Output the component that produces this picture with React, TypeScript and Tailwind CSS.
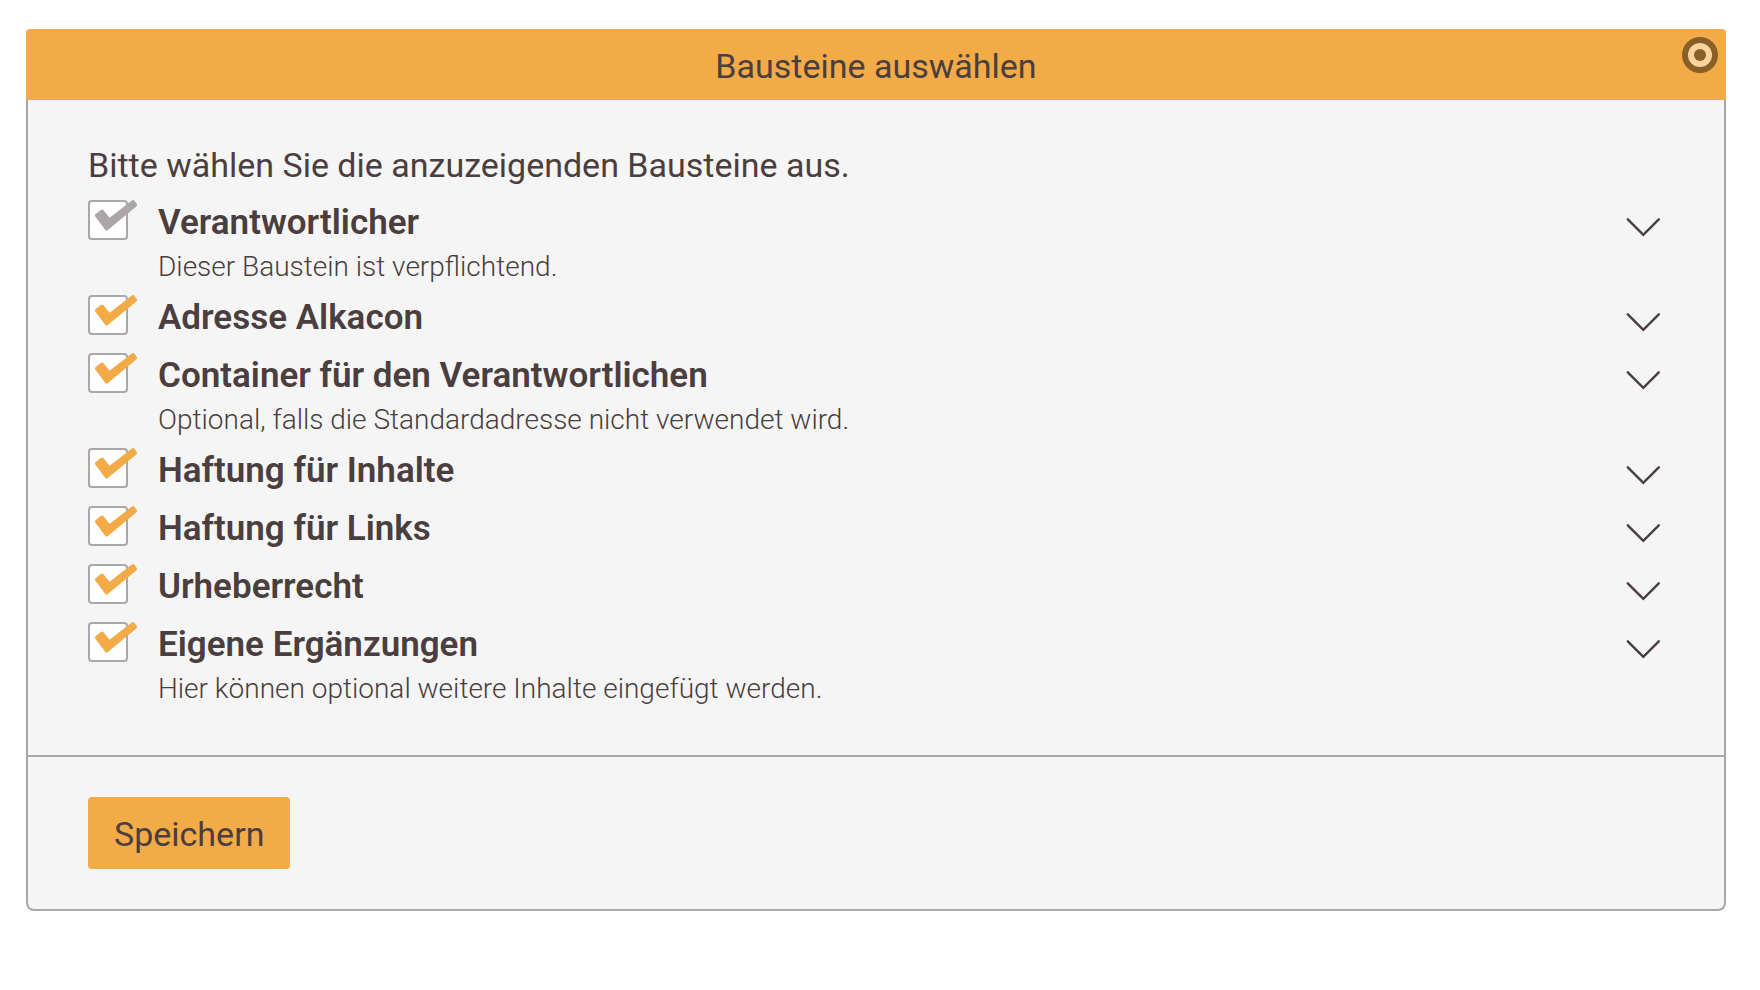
import { useState } from "react";

interface Baustein {
	id: string;
	title: string;
	hint?: string;
	required?: boolean;
}

const BAUSTEINE: Baustein[] = [
	{
		id: "verantwortlicher",
		title: "Verantwortlicher",
		hint: "Dieser Baustein ist verpflichtend.",
		required: true,
	},
	{ id: "adresse", title: "Adresse Alkacon" },
	{
		id: "container",
		title: "Container für den Verantwortlichen",
		hint: "Optional, falls die Standardadresse nicht verwendet wird.",
	},
	{ id: "inhalte", title: "Haftung für Inhalte" },
	{ id: "links", title: "Haftung für Links" },
	{ id: "urheberrecht", title: "Urheberrecht" },
	{
		id: "ergaenzungen",
		title: "Eigene Ergänzungen",
		hint: "Hier können optional weitere Inhalte eingefügt werden.",
	},
];

const TargetIcon = () => (
	<svg className="block h-9 w-9" viewBox="0 0 36 36" aria-hidden="true">
		<circle cx="18" cy="18" r="18" fill="#875f27" />
		<circle cx="18" cy="18" r="12" fill="#f9d39d" />
		<circle cx="18" cy="18" r="6" fill="#875f27" />
	</svg>
);

// The tick is wider than its box and sticks out at the top right.
const Tick = () => (
	<svg
		className="pointer-events-none invisible absolute left-0 top-0 h-10 w-[50px] text-[#f3ab47] peer-checked:visible peer-disabled:text-[#aca6a6]"
		viewBox="0 0 50 40"
		fill="currentColor"
		stroke="currentColor"
		strokeWidth="4"
		strokeLinejoin="round"
		aria-hidden="true"
	>
		<path d="M9 15.6 14 11.6 21.2 20.6 45 2.2 47 5 18.6 28.4Z" />
	</svg>
);

const Chevron = () => (
	<svg
		className="block h-5 w-9"
		viewBox="0 0 36 20"
		fill="none"
		stroke="currentColor"
		strokeWidth="2.4"
		strokeLinecap="round"
		aria-hidden="true"
	>
		<path d="M2.8 2.3 18.3 17.8 33.8 2.3" />
	</svg>
);

interface RowProps {
	item: Baustein;
	checked: boolean;
	onToggle: () => void;
}

const BausteinRow = ({ item, checked, onToggle }: RowProps) => (
	<li className="flex items-start pb-2">
		<span className="relative mt-0.5 h-10 w-10 shrink-0">
			<input
				id={item.id}
				type="checkbox"
				checked={checked}
				disabled={item.required}
				onChange={onToggle}
				className="peer block h-10 w-10 appearance-none rounded border-2 border-[#aca6a6] bg-white"
			/>
			<Tick />
		</span>
		<div className="ml-[30px] min-w-0 grow">
			<label
				htmlFor={item.id}
				className="block text-[35px] font-semibold leading-[50px]"
			>
				{item.title}
			</label>
			{item.hint && (
				<p className="text-[28px] font-light leading-[37px]">{item.hint}</p>
			)}
		</div>
		<button
			type="button"
			aria-label={`${item.title} anzeigen`}
			className="mr-[63px] mt-[19px] shrink-0"
		>
			<Chevron />
		</button>
	</li>
);

export default function App() {
	const [selected, setSelected] = useState<string[]>(
		BAUSTEINE.map((item) => item.id)
	);

	const toggle = (id: string) => {
		setSelected((prev) =>
			prev.includes(id) ? prev.filter((x) => x !== id) : [...prev, id]
		);
	};

	return (
		<main className="min-h-screen bg-white pb-8 pl-[26px] pr-[34px] pt-[29px] font-['Roboto',sans-serif] text-[#4a3e3e]">
			<form onSubmit={(e) => e.preventDefault()}>
				<header className="relative rounded-t bg-[#f3ab47] pb-[9px] pt-3 text-center">
					<h1 className="text-[34px] leading-[50px]">Bausteine auswählen</h1>
					<button
						type="button"
						aria-label="Optionen"
						className="absolute right-2 top-2"
					>
						<TargetIcon />
					</button>
				</header>

				<div className="rounded-b-lg border-2 border-t-0 border-[#aca6a6] bg-[#f5f5f5]">
					<div className="pb-10 pl-[60px] pt-10">
						<p className="mb-2 text-[34px] leading-[50px]">
							Bitte wählen Sie die anzuzeigenden Bausteine aus.
						</p>
						<ul>
							{BAUSTEINE.map((item) => (
								<BausteinRow
									key={item.id}
									item={item}
									checked={selected.includes(item.id)}
									onToggle={() => toggle(item.id)}
								/>
							))}
						</ul>
					</div>

					<footer className="border-t-2 border-[#aca6a6] px-[60px] py-10">
						<button
							type="submit"
							className="rounded bg-[#f3ab47] px-[26px] pb-2.5 pt-3 text-[34px] leading-[50px]"
						>
							Speichern
						</button>
					</footer>
				</div>
			</form>
		</main>
	);
}
